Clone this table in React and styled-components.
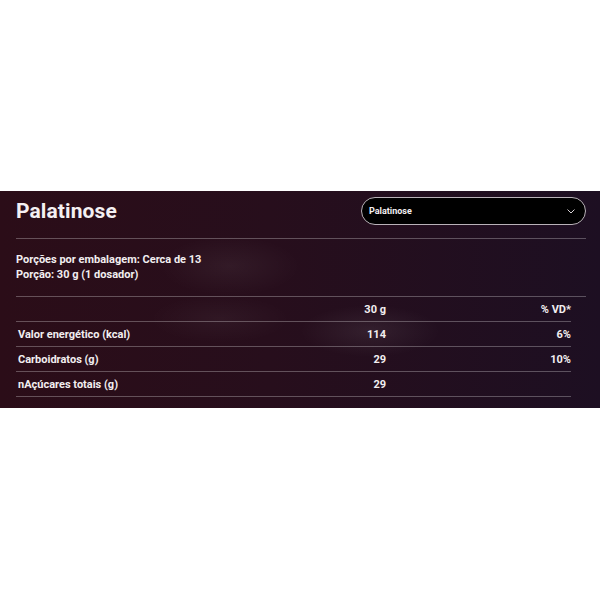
import React from "react";
import styled, { createGlobalStyle } from "styled-components";

const Global = createGlobalStyle`
  html, body { margin: 0; padding: 0; background: #ffffff; }
  body { font-family: Roboto, "DejaVu Sans", sans-serif; }
`;

const Page = styled.div`
  width: 600px;
  height: 600px;
  display: flex;
  flex-direction: column;
  justify-content: flex-start;
  padding-top: 191px;
  box-sizing: border-box;
`;

const Panel = styled.section`
  height: 217px;
  box-sizing: border-box;
  padding: 6px 14px 0 16px;
  color: #f2eef0;
  font-family: Roboto, "DejaVu Sans", sans-serif;
  background:
    radial-gradient(ellipse 70px 30px at 230px 75px, rgba(255,255,255,0.05), transparent 100%),
    radial-gradient(ellipse 70px 26px at 370px 140px, rgba(255,255,255,0.07), transparent 100%),
    radial-gradient(ellipse 70px 24px at 220px 128px, rgba(255,255,255,0.04), transparent 100%),
    linear-gradient(90deg, #2b0d18 0%, #270e1c 45%, #1d0f22 100%);
`;

const Header = styled.div`
  display: flex;
  align-items: center;
  justify-content: space-between;
  height: 28px;
  margin-bottom: 13px;
`;

const Title = styled.h1`
  margin: 0;
  font-size: 21px;
  font-weight: 700;
  letter-spacing: 0.1px;
  color: #f4f0f2;
`;

const Select = styled.div`
  width: 225px;
  height: 28px;
  box-sizing: border-box;
  border: 1px solid #b9b2b8;
  border-radius: 14px;
  background: #000;
  display: flex;
  align-items: center;
  justify-content: space-between;
  padding: 0 10px 0 7px;
  font-size: 9px;
  font-weight: 700;
  color: #f4f0f2;
`;

const Divider = styled.div`
  height: 1px;
  background: rgba(255,255,255,0.28);
`;

const Info = styled.div`
  padding: 13px 0 14px;
  font-size: 11px;
  font-weight: 700;
  line-height: 15px;
`;

const Table = styled.div`
  margin-right: 15px;
`;

const Row = styled.div`
  display: grid;
  grid-template-columns: 1fr 62px 185px;
  height: 25px;
  align-items: center;
  font-size: 11px;
  font-weight: 700;
  border-bottom: 1px solid rgba(255,255,255,0.28);
  box-sizing: border-box;
  padding-left: 2px;
`;

const Cell = styled.span`
  text-align: ${p => (p.$right ? "right" : "left")};
`;

const Chevron = () => (
  <svg width="8" height="5" viewBox="0 0 8 5" fill="none">
    <path d="M0.8 0.8l3.2 3.2 3.2-3.2" stroke="#d8d2d6" strokeWidth="1" strokeLinecap="round" strokeLinejoin="round" />
  </svg>
);

const rows = [
  ["Valor energético (kcal)", "114", "6%"],
  ["Carboidratos (g)", "29", "10%"],
  ["nAçúcares totais (g)", "29", ""],
];

export default function App() {
  return (
    <>
      <Global />
      <Page>
        <Panel>
          <Header>
            <Title>Palatinose</Title>
            <Select>
              <span>Palatinose</span>
              <Chevron />
            </Select>
          </Header>
          <Divider />
          <Info>
            <div>Porções por embalagem: Cerca de 13</div>
            <div>Porção: 30 g (1 dosador)</div>
          </Info>
          <Divider />
          <Table>
            <Row>
              <span />
              <Cell $right>30 g</Cell>
              <Cell $right>% VD*</Cell>
            </Row>
            {rows.map(r => (
              <Row key={r[0]}>
                <Cell>{r[0]}</Cell>
                <Cell $right>{r[1]}</Cell>
                <Cell $right>{r[2]}</Cell>
              </Row>
            ))}
          </Table>
        </Panel>
      </Page>
    </>
  );
}
